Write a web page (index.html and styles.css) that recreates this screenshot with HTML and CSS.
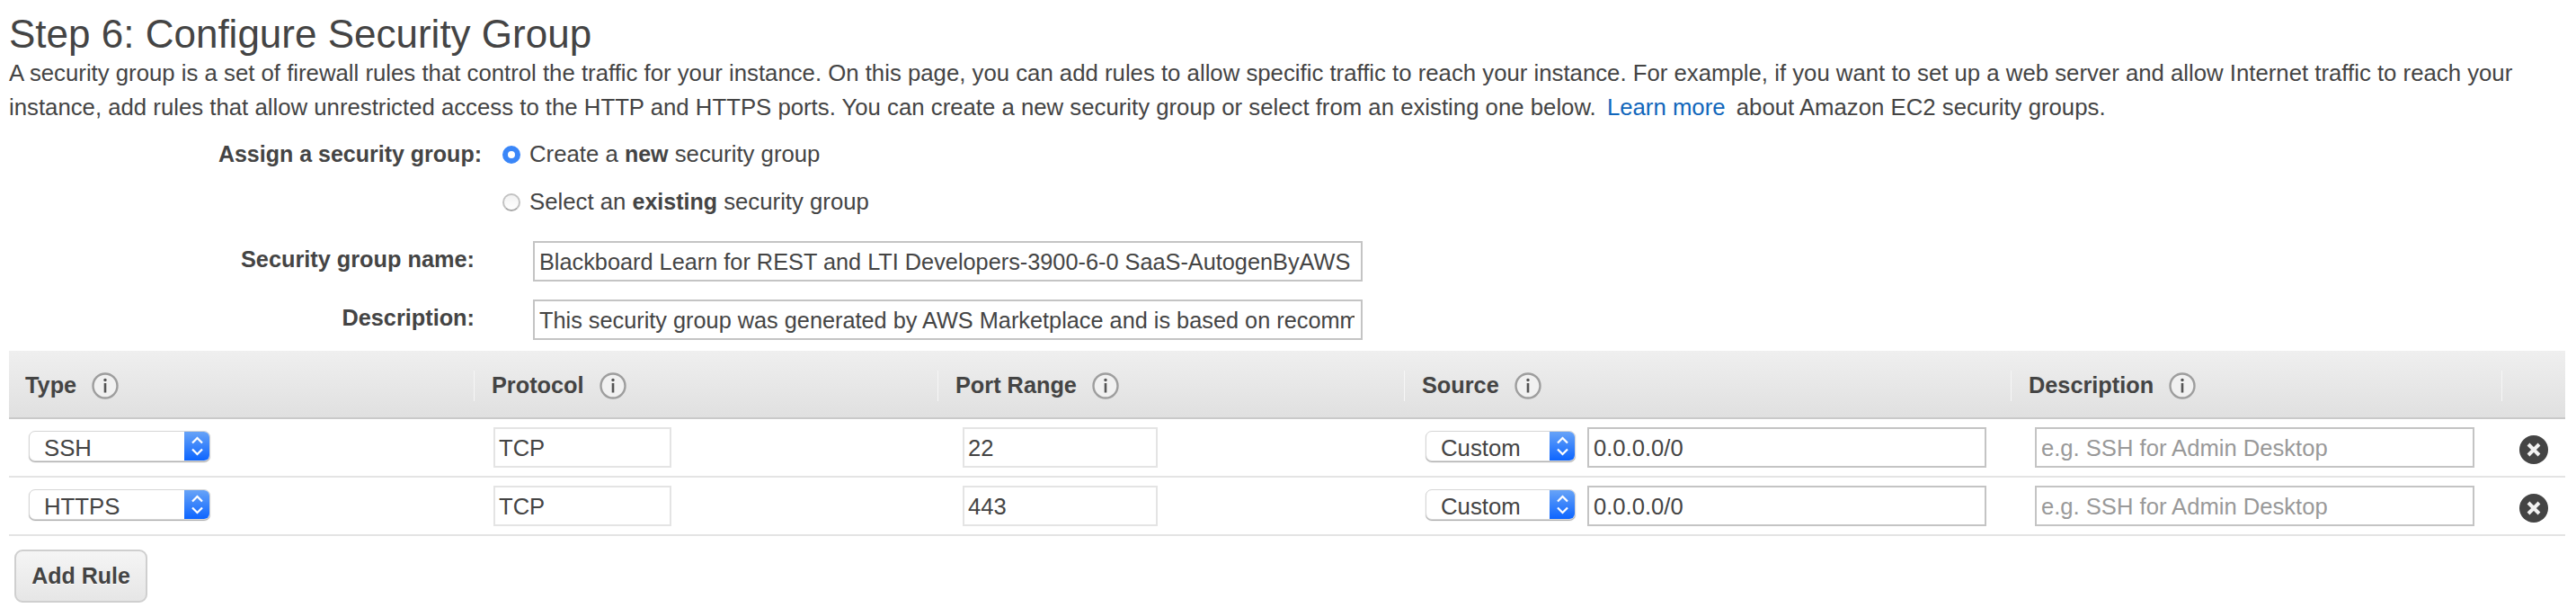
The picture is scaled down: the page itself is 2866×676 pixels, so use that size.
FILE: index.html
```html
<!DOCTYPE html>
<html>
<head>
    <meta charset="UTF-8">
    <title>Step 6: Configure Security Group</title>
    <link rel="stylesheet" href="styles.css">
</head>
<body>
<div class="page">
    <h1>Step 6: Configure Security Group</h1>
    <p class="intro">A security group is a set of firewall rules that control the traffic for your instance. On this page, you can add rules to allow specific traffic to reach your instance. For example, if you want to set up a web server and allow Internet traffic to reach your instance, add rules that allow unrestricted access to the HTTP and HTTPS ports. You can create a new security group or select from an existing one below. <a href="#" class="learn">Learn more</a> about Amazon EC2 security groups.</p>

    <div class="assign">
        <div class="assign-label">Assign a security group:</div>
        <div class="choices">
            <label class="choice"><span class="radio radio-on"></span><span>Create a <b>new</b> security group</span></label>
            <label class="choice"><span class="radio"></span><span>Select an <b>existing</b> security group</span></label>
        </div>
    </div>

    <div class="field field-name">
        <label class="field-label">Security group name:</label>
        <input class="text field-input" type="text" value="Blackboard Learn for REST and LTI Developers-3900-6-0 SaaS-AutogenByAWS">
    </div>
    <div class="field field-desc">
        <label class="field-label">Description:</label>
        <input class="text field-input" type="text" value="This security group was generated by AWS Marketplace and is based on recommended settings">
    </div>

    <table class="rules">
        <colgroup>
            <col class="col-type"><col class="col-proto"><col class="col-port"><col class="col-source"><col class="col-desc"><col class="col-del">
        </colgroup>
        <thead>
            <tr>
                <th><div class="head head-first">Type <svg class="info" viewBox="0 0 30 30"><use href="#i-info"/></svg></div></th>
                <th><div class="head">Protocol <svg class="info" viewBox="0 0 30 30"><use href="#i-info"/></svg></div></th>
                <th><div class="head">Port Range <svg class="info" viewBox="0 0 30 30"><use href="#i-info"/></svg></div></th>
                <th><div class="head">Source <svg class="info" viewBox="0 0 30 30"><use href="#i-info"/></svg></div></th>
                <th><div class="head">Description <svg class="info" viewBox="0 0 30 30"><use href="#i-info"/></svg></div></th>
                <th><div class="head"></div></th>
            </tr>
        </thead>
        <tbody>
            <tr>
                <td class="cell-type">
                    <div class="select select-type"><span class="select-val">SSH</span><span class="select-arrows"><svg viewBox="0 0 29 34"><use href="#i-updown"/></svg></span></div>
                </td>
                <td class="cell-proto"><input class="text text-off input-proto" type="text" value="TCP" disabled></td>
                <td class="cell-port"><input class="text text-off input-port" type="text" value="22" disabled></td>
                <td class="cell-source">
                    <div class="source">
                        <div class="select select-source"><span class="select-val">Custom</span><span class="select-arrows"><svg viewBox="0 0 29 34"><use href="#i-updown"/></svg></span></div>
                        <input class="text input-cidr" type="text" value="0.0.0.0/0">
                    </div>
                </td>
                <td class="cell-desc"><input class="text input-desc" type="text" placeholder="e.g. SSH for Admin Desktop"></td>
                <td class="cell-del"><svg class="del" viewBox="0 0 32 32"><use href="#i-del"/></svg></td>
            </tr>
            <tr>
                <td class="cell-type">
                    <div class="select select-type"><span class="select-val">HTTPS</span><span class="select-arrows"><svg viewBox="0 0 29 34"><use href="#i-updown"/></svg></span></div>
                </td>
                <td class="cell-proto"><input class="text text-off input-proto" type="text" value="TCP" disabled></td>
                <td class="cell-port"><input class="text text-off input-port" type="text" value="443" disabled></td>
                <td class="cell-source">
                    <div class="source">
                        <div class="select select-source"><span class="select-val">Custom</span><span class="select-arrows"><svg viewBox="0 0 29 34"><use href="#i-updown"/></svg></span></div>
                        <input class="text input-cidr" type="text" value="0.0.0.0/0">
                    </div>
                </td>
                <td class="cell-desc"><input class="text input-desc" type="text" placeholder="e.g. SSH for Admin Desktop"></td>
                <td class="cell-del"><svg class="del" viewBox="0 0 32 32"><use href="#i-del"/></svg></td>
            </tr>
        </tbody>
    </table>

    <button class="add-rule" type="button">Add Rule</button>
</div>

<!-- icons -->
<svg class="sprite" width="0" height="0">
    <symbol id="i-info" viewBox="0 0 30 30">
        <circle cx="15" cy="15" r="13.5" fill="#f1f1f1" stroke="#9e9e9e" stroke-width="2.4"/>
        <circle cx="15" cy="8.5" r="1.7" fill="#555"/>
        <rect x="13.7" y="12" width="2.6" height="10.5" fill="#555"/>
    </symbol>
    <symbol id="i-updown" viewBox="0 0 29 34">
        <path d="M9 13.5l5.5-5.5 5.5 5.5M9 20.5l5.5 5.5 5.5-5.5" fill="none" stroke="#fff" stroke-width="2.2"/>
    </symbol>
    <symbol id="i-del" viewBox="0 0 32 32">
        <circle cx="16" cy="16" r="16" fill="#444"/>
        <path d="M10 10l12 12M22 10l-12 12" fill="none" stroke="#f2f2f2" stroke-width="4"/>
    </symbol>
</svg>
</body>
</html>
```
FILE: styles.css
```css
* {
    box-sizing: border-box;
}
body {
    margin: 0;
    background: #fff;
    color: #444;
    font: 25.75px "Liberation Sans", Arial, sans-serif;
}
.page {
    padding: 0 12px 0 10px;
}
h1 {
    margin: 0;
    padding-top: 14px;
    font-size: 44px;
    font-weight: normal;
    line-height: 48px;
}
.intro {
    margin: 0;
    line-height: 38px;
}
.learn {
    margin: 0 5px;
    color: #1166bb;
    text-decoration: none;
}
b {
    font-size: 25px;
}

/* radio rows */
.assign {
    display: flex;
    margin-top: 7px;
}
.assign-label {
    width: 526px;
    text-align: right;
    font-size: 25px;
    font-weight: bold;
    line-height: 53px;
}
.choices {
    margin-left: 23px;
}
.choice {
    display: flex;
    align-items: center;
    height: 53px;
}
.radio {
    width: 20px;
    height: 20px;
    margin-right: 10px;
    border: 2px solid #c2c2c2;
    border-bottom-color: #a8a8a8;
    border-radius: 50%;
    background: linear-gradient(#f2f2f2, #fff);
}
.radio-on {
    border: 6px solid #3a86f8;
    background: #fff;
}

/* name + description */
.field {
    display: flex;
}
.field-name {
    margin-top: 17px;
}
.field-desc {
    margin-top: 20px;
}
.field-label {
    width: 518px;
    margin-right: 65px;
    text-align: right;
    font-size: 25.3px;
    font-weight: bold;
    line-height: 41px;
}
.field-label + .field-input {
    width: 923px;
    font-size: 25.3px;
}
.text {
    height: 45px;
    padding: 2px 7px 0 5px;
    border: 2px solid #c4c4c4;
    background: #fff;
    color: #444;
    font: 25.6px "Liberation Sans", Arial, sans-serif;
    outline: none;
}
.text::placeholder {
    color: #999;
}
.text-off {
    padding-left: 4px;
    border-color: #e4e4e4;
}

/* rules table */
.rules {
    width: 2844px;
    margin-top: 12px;
    border-collapse: collapse;
    table-layout: fixed;
}
.col-type { width: 517px; }
.col-proto { width: 516px; }
.col-port { width: 519px; }
.col-source { width: 675px; }
.col-desc { width: 546px; }
.col-del { width: 71px; }

.rules th {
    height: 75px;
    padding: 0;
    border-bottom: 2px solid #c9c9c9;
    background: linear-gradient(#efefef, #e0e0e0);
    text-align: left;
}
.head {
    display: flex;
    align-items: center;
    height: 34px;
    margin-top: 3px;
    padding-left: 19px;
    border-left: 1px solid #f6f6f6;
    font-size: 25.3px;
    font-weight: bold;
    gap: 17px;
}
.head-first {
    padding-left: 18px;
    border-left: 0;
}
.info {
    width: 30px;
    height: 30px;
}
.rules td {
    height: 65px;
    padding: 9px 0 0;
    border-bottom: 2px solid #e4e4e4;
    vertical-align: top;
}
.cell-type { padding-left: 22px !important; }
.cell-proto { padding-left: 22px !important; }
.cell-port { padding-left: 28px !important; }
.cell-source { padding-left: 24px !important; }
.cell-desc { padding-left: 27px !important; }
.cell-del { padding-left: 20px !important; }

.input-proto { width: 198px; }
.input-port { width: 217px; }
.input-cidr { width: 444px; margin-left: 13px; }
.input-desc { width: 489px; }

.source {
    display: flex;
}
.select {
    display: flex;
    height: 34px;
    margin-top: 4px;
    border: 1px solid #d6d6d6;
    border-radius: 7px;
    background: #fff;
    box-shadow: 0 1px 1px #aaa;
    overflow: hidden;
}
.select-type { width: 202px; }
.select-source { width: 167px; }
.select-val {
    flex: 1;
    padding-left: 16px;
    line-height: 36px;
}
.select-arrows {
    display: block;
    width: 29px;
    height: 34px;
    margin: -1px -1px 0 0;
    background: linear-gradient(#6aa5f7, #0a63ff);
}
.select-arrows svg {
    display: block;
    width: 29px;
    height: 34px;
}
.del {
    display: block;
    width: 32px;
    height: 32px;
    margin-top: 9px;
}
.add-rule {
    display: block;
    width: 148px;
    height: 59px;
    margin: 15px 0 0 6px;
    padding: 0;
    border: 2px solid #cfcfcf;
    border-radius: 9px;
    background: linear-gradient(#f5f5f5, #e6e6e6);
    color: #444;
    font: bold 25px "Liberation Sans", Arial, sans-serif;
    text-shadow: 0 1px 0 #fff;
}
.sprite {
    position: absolute;
}
```
